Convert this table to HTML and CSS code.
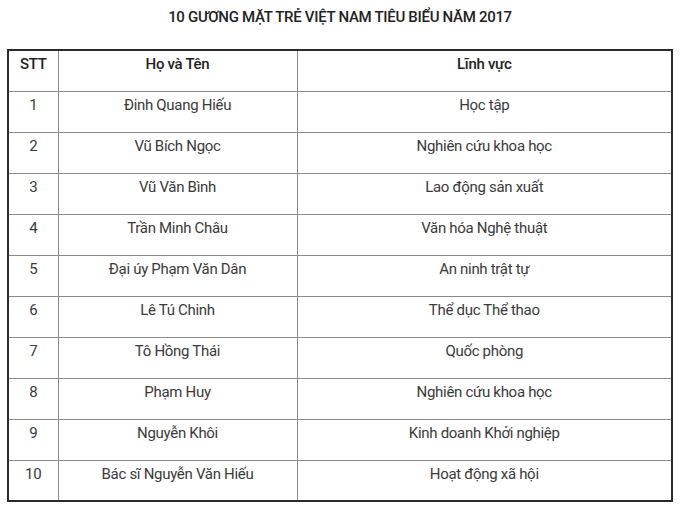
FILE: index.html
```html
<!DOCTYPE html>
<html lang="vi">
<head>
<meta charset="utf-8">
<title>10 gương mặt trẻ</title>
<link rel="stylesheet" href="styles.css">
</head>
<body>
<div class="page">
  <h1 class="title">10 GƯƠNG MẶT TRẺ VIỆT NAM TIÊU BIỂU NĂM 2017</h1>
  <table class="list">
    <colgroup>
      <col class="c-stt">
      <col class="c-name">
      <col class="c-field">
    </colgroup>
    <tr class="head"><td>STT</td><td>Họ và Tên</td><td>Lĩnh vực</td></tr>
    <tr><td>1</td><td>Đinh Quang Hiếu</td><td>Học tập</td></tr>
    <tr><td>2</td><td>Vũ Bích Ngọc</td><td>Nghiên cứu khoa học</td></tr>
    <tr><td>3</td><td>Vũ Văn Bình</td><td>Lao động sản xuất</td></tr>
    <tr><td>4</td><td>Trần Minh Châu</td><td>Văn hóa Nghệ thuật</td></tr>
    <tr><td>5</td><td>Đại úy Phạm Văn Dân</td><td>An ninh trật tự</td></tr>
    <tr><td>6</td><td>Lê Tú Chinh</td><td>Thể dục Thể thao</td></tr>
    <tr><td>7</td><td>Tô Hồng Thái</td><td>Quốc phòng</td></tr>
    <tr><td>8</td><td>Phạm Huy</td><td>Nghiên cứu khoa học</td></tr>
    <tr><td>9</td><td>Nguyễn Khôi</td><td>Kinh doanh Khởi nghiệp</td></tr>
    <tr><td>10</td><td>Bác sĩ Nguyễn Văn Hiếu</td><td>Hoạt động xã hội</td></tr>
  </table>
</div>
</body>
</html>
```
FILE: styles.css
```css
html, body {
  margin: 0;
  padding: 0;
  background: #ffffff;
}
.page {
  padding: 8px 10px 0 7px;
  font-family: Roboto, "Liberation Sans", sans-serif;
  color: #3a3a3a;
}
.title {
  margin: 0 0 22px 0;
  font-size: 15px;
  font-weight: 500;
  line-height: 19px;
  text-align: center;
  color: #222222;
  letter-spacing: -0.3px;
}
.list {
  width: 666px;
  border-collapse: collapse;
  border: 2px solid #2b2b2b;
  table-layout: fixed;
  font-size: 15px;
}
.c-stt { width: 50px; }
.c-name { width: 239px; }
.list td {
  border: 1px solid #8a8a8a;
  height: 41px;
  padding: 5px 4px 0 4px;
  vertical-align: top;
  text-align: center;
  line-height: 17px;
  box-sizing: border-box;
  letter-spacing: -0.3px;
}
.list .head td {
  font-weight: 500;
  color: #222222;
}
```
